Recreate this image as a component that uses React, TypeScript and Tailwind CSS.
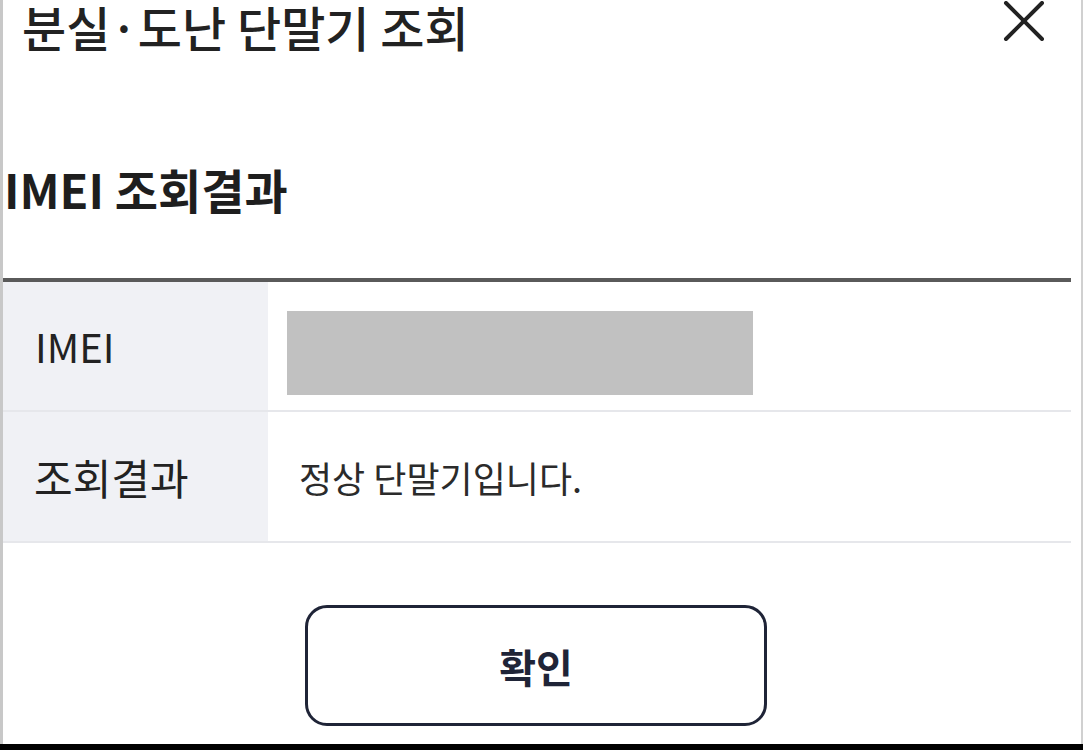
export default function App() {
  const font = { fontFamily: '"Noto Sans CJK KR", "Noto Sans", sans-serif' }
  return (
    <div className="w-[1083px] h-[750px] flex flex-col bg-white overflow-hidden" style={font}>
      <div className="flex-1 flex flex-col border-l-[3px] border-l-[#c8c8c8] border-r-[2px] border-r-[#d0d0d0]">
        {/* header */}
        <div className="h-[62px] flex items-start justify-between pl-[19px] pr-[36px]">
          <h1 className="text-[48px] leading-[52px] font-medium text-[#222222] whitespace-nowrap">
            분실·도난 단말기 조회
          </h1>
          <button className="mt-[1px] w-[42px] h-[40px] flex items-center justify-center text-[#222222]">
            <svg width="42" height="40" viewBox="0 0 42 40" fill="none" stroke="currentColor" strokeWidth="4" strokeLinecap="round">
              <line x1="3" y1="2" x2="39" y2="38" />
              <line x1="39" y1="2" x2="3" y2="38" />
            </svg>
          </button>
        </div>

        <div className="h-[216px] flex items-start pt-[96px] pl-[1px]">
          <h2 className="text-[47px] leading-[62px] font-bold text-[#1e1e1e] whitespace-nowrap">IMEI 조회결과</h2>
        </div>

        {/* table */}
        <div className="mr-[10px] border-t-[4px] border-t-[#5a5a5a]">
          <div className="flex h-[130px] border-b-[2px] border-b-[#e6e7eb]">
            <div className="w-[265px] bg-[#f0f1f5] flex items-center pl-[32px] text-[40px] text-[#222222] font-normal">
              IMEI
            </div>
            <div className="flex-1 flex items-start pt-[29px] pl-[19px]">
              <div className="w-[466px] h-[84px] bg-[#c1c1c1]" />
            </div>
          </div>
          <div className="flex h-[131px] border-b-[2px] border-b-[#e6e7eb]">
            <div className="w-[265px] bg-[#f0f1f5] flex items-center pl-[31px] text-[42px] text-[#222222] font-normal">
              조회결과
            </div>
            <div className="flex-1 flex items-center pl-[31px] text-[36px] text-[#2b2b2b]">
              정상 단말기입니다.
            </div>
          </div>
        </div>

        {/* confirm */}
        <div className="pt-[62px] pl-[302px]">
          <button className="w-[462px] h-[121px] rounded-[22px] border-[3px] border-[#1f2437] flex items-center justify-center text-[40px] font-bold text-[#1f2437] bg-white">
            확인
          </button>
        </div>
      </div>
      <div className="h-[6px] bg-black" />
    </div>
  )
}
